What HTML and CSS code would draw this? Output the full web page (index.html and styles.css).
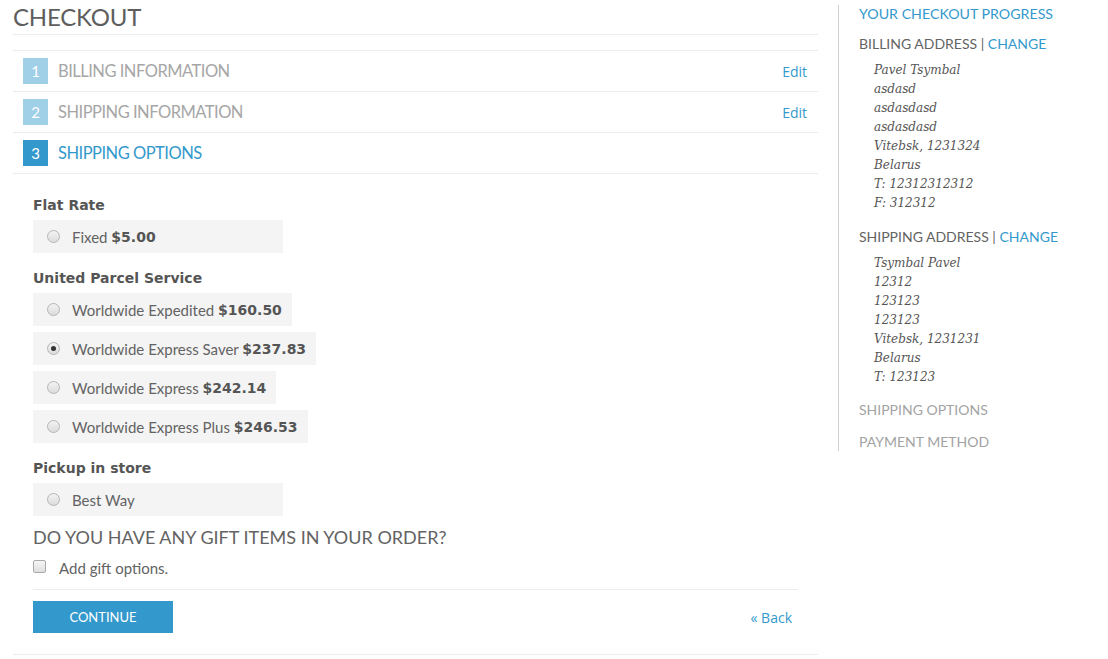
FILE: index.html
```html
<!DOCTYPE html>
<html>
<head>
<meta charset="utf-8">
<link rel="stylesheet" href="styles.css">
</head>
<body>
<div class="page">
  <main class="main">
    <h1 class="title">Checkout</h1>
    <ol class="steps">
      <li class="step done">
        <span class="num">1</span><span class="step-name">Billing Information</span>
        <a class="edit" href="#">Edit</a>
      </li>
      <li class="step done">
        <span class="num">2</span><span class="step-name">Shipping Information</span>
        <a class="edit" href="#">Edit</a>
      </li>
      <li class="step active">
        <span class="num">3</span><span class="step-name">Shipping Options</span>
      </li>
    </ol>
    <section class="options">
      <div class="carrier">Flat Rate</div>
      <div class="opt-list">
        <label class="opt wide"><span class="radio"></span>Fixed <b>$5.00</b></label>
      </div>
      <div class="carrier">United Parcel Service</div>
      <div class="opt-list">
        <label class="opt"><span class="radio"></span>Worldwide Expedited <b>$160.50</b></label>
        <label class="opt"><span class="radio checked"></span>Worldwide Express Saver <b>$237.83</b></label>
        <label class="opt"><span class="radio"></span>Worldwide Express <b>$242.14</b></label>
        <label class="opt"><span class="radio"></span>Worldwide Express Plus <b>$246.53</b></label>
      </div>
      <div class="carrier">Pickup in store</div>
      <div class="opt-list">
        <label class="opt wide"><span class="radio"></span>Best Way</label>
      </div>
      <h2 class="gift-title">Do you have any gift items in your order?</h2>
      <label class="gift"><span class="check"></span>Add gift options.</label>
      <div class="actions">
        <button class="continue">Continue</button>
        <a class="back" href="#">« Back</a>
      </div>
    </section>
    <div class="bottom-line"></div>
  </main>
  <aside class="side">
    <h3 class="side-title">Your Checkout Progress</h3>
    <div class="side-head">Billing Address | <a href="#">Change</a></div>
    <address class="addr">Pavel Tsymbal<br>asdasd<br>asdasdasd<br>asdasdasd<br>Vitebsk, 1231324<br>Belarus<br>T: 12312312312<br>F: 312312</address>
    <div class="side-head">Shipping Address | <a href="#">Change</a></div>
    <address class="addr">Tsymbal Pavel<br>12312<br>123123<br>123123<br>Vitebsk, 1231231<br>Belarus<br>T: 123123</address>
    <div class="side-head muted">Shipping Options</div>
    <div class="side-head muted last">Payment Method</div>
  </aside>
</div>
</body>
</html>
```
FILE: styles.css
```css
* { box-sizing: border-box; }
body {
  margin: 0;
  background: #fff;
  font-family: Lato, "Open Sans", sans-serif;
  color: #636363;
}
a { text-decoration: none; color: #3399cc; }
.page {
  display: flex;
  align-items: flex-start;
  padding-left: 13px;
}
.main {
  width: 805px;
  flex: none;
}
.title {
  margin: 0;
  padding-top: 4px;
  height: 35px;
  font-size: 24px;
  line-height: 26px;
  font-weight: 400;
  text-transform: uppercase;
  color: #5e5e5e;
  border-bottom: 1px solid #ececec;
  letter-spacing: -0.2px;
}
.steps {
  list-style: none;
  margin: 15px 0 0;
  padding: 0;
  border-top: 1px solid #ececec;
}
.step {
  display: flex;
  align-items: center;
  height: 41px;
  border-bottom: 1px solid #ececec;
  padding: 0 11px 0 10px;
}
.num {
  width: 25px;
  height: 26px;
  display: flex;
  align-items: center;
  justify-content: center;
  background: #9fd0e8;
  color: #fff;
  font-size: 15px;
  margin-right: 10px;
}
.step-name {
  font-size: 16.5px;
  letter-spacing: -0.5px;
  text-transform: uppercase;
  color: #a6a6a6;
  flex: 1;
  margin-top: -1px;
}
.active .num { background: #3399cc; }
.active .step-name { color: #3399cc; }
.edit {
  font-family: "Open Sans", sans-serif;
  font-size: 14px;
  color: #3399cc;
}
.options {
  padding: 22px 20px 0 20px;
}
.carrier {
  font-family: "DejaVu Sans", Verdana, sans-serif;
  font-weight: bold;
  font-size: 14px;
  color: #555;
  line-height: 18px;
  margin-bottom: 6px;
}
.opt-list {
  display: flex;
  flex-direction: column;
  align-items: flex-start;
  gap: 6px;
  margin-bottom: 16px;
}
.opt {
  display: flex;
  align-items: center;
  height: 33px;
  background: #f4f4f4;
  padding: 0 10px 0 14px;
  font-size: 15px;
  color: #636363;
  white-space: pre;
}
.opt.wide { min-width: 250px; }
.opt b {
  font-family: "DejaVu Sans", Verdana, sans-serif;
  font-size: 14px;
  color: #555;
}
.radio {
  width: 13px;
  height: 13px;
  border-radius: 50%;
  border: 1px solid #b5b5b5;
  background: linear-gradient(#f3f3f3, #dcdcdc);
  margin-right: 12px;
  margin-top: -1px;
  display: inline-flex;
  align-items: center;
  justify-content: center;
}
.radio.checked::after {
  content: "";
  width: 5px;
  height: 5px;
  border-radius: 50%;
  background: #333;
}
.gift-title {
  margin: -7px 0 0;
  font-size: 18px;
  font-weight: 400;
  text-transform: uppercase;
  color: #636363;
  line-height: 24px;
}
.gift {
  display: flex;
  align-items: center;
  margin-top: 9px;
  font-size: 15px;
  color: #636363;
  height: 20px;
}
.check {
  width: 13px;
  height: 13px;
  border: 1px solid #aaa;
  border-radius: 2px;
  background: linear-gradient(#f6f6f6, #dedede);
  margin-right: 13px;
  margin-top: -3px;
}
.actions {
  margin-top: 11px;
  border-top: 1px solid #ececec;
  padding-top: 11px;
  display: flex;
  justify-content: space-between;
  align-items: center;
  padding-right: 6px;
}
.continue {
  width: 140px;
  height: 32px;
  border: 0;
  background: #3399cc;
  color: #fff;
  font-family: Lato, sans-serif;
  font-size: 13px;
  text-transform: uppercase;
  padding: 0;
}
.back {
  font-family: "Open Sans", sans-serif;
  font-size: 14px;
  color: #3399cc;
}
.bottom-line {
  margin-top: 21px;
  border-top: 1px solid #ececec;
}
.side {
  display: flex;
  flex-direction: column;
  margin-left: 20px;
  margin-top: 5px;
  border-left: 1px solid #cfcfcf;
  padding: 0 0 0 20px;
  width: 270px;
  height: 446px;
}
.side-title {
  margin: 0;
  font-size: 14.2px;
  font-weight: 400;
  text-transform: uppercase;
  color: #3399cc;
  line-height: 18px;
}
.side-head {
  margin-top: 12px;
  font-size: 14px;
  text-transform: uppercase;
  color: #636363;
  line-height: 18px;
}
.side-head.muted { color: #a3a3a3; margin-top: 11px; }
.side-head.muted.last { margin-top: 14px; }
.addr {
  margin: 8px 0 3px 15px;
  font-family: "DejaVu Serif", Georgia, serif;
  font-style: italic;
  font-size: 12px;
  line-height: 19px;
  color: #555;
}
```
